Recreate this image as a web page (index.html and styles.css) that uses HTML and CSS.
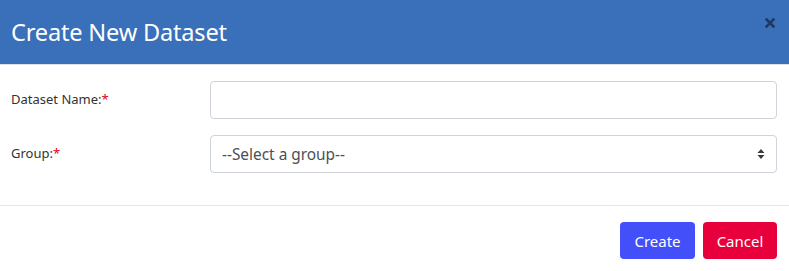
FILE: index.html
```html
<!DOCTYPE html>
<html>
  <head>
    <meta charset="utf-8">
    <title>Create New Dataset</title>
    <link rel="stylesheet" href="styles.css">
  </head>
  <body>
    <section class="modal">
        <header class="modalHeader">
            <h1>Create New Dataset</h1>
            <button class="close" aria-label="Close">
                <svg width="10" height="10" viewBox="0 0 10 10">
                    <path d="M1.5 1.5 L8.5 8.5 M8.5 1.5 L1.5 8.5" stroke="#1d3a63" stroke-width="2.6" stroke-linecap="square"/>
                </svg>
            </button>
        </header>
        <form class="modalBody">
            <div class="formRow">
                <label for="datasetName">Dataset Name:<span class="required">*</span></label>
                <input type="text" id="datasetName">
            </div>
            <div class="formRow">
                <label for="group">Group:<span class="required">*</span></label>
                <div class="selectBox">
                    <select id="group">
                        <option>--Select a group--</option>
                    </select>
                    <svg class="caret" width="8" height="12" viewBox="0 0 8 12">
                        <path d="M4 1 L7.5 5 H0.5 Z M4 11 L7.5 7 H0.5 Z" fill="#343a40"/>
                    </svg>
                </div>
            </div>
        </form>
        <footer class="modalFooter">
            <button class="btn create">Create</button>
            <button class="btn cancel">Cancel</button>
        </footer>
    </section>
  </body>
</html>
```

FILE: styles.css
```css
body {
    margin: 0;
    font-family: "Noto Sans", "Open Sans", sans-serif;
    color: #333;
    background: #fff;
}
.modal {
    width: 789px;
}
.modalHeader {
    display: flex;
    align-items: center;
    justify-content: space-between;
    height: 65px;
    box-sizing: border-box;
    padding: 0 14px 0 11px;
    background: #3a6fb9;
    border-bottom: 1px solid #dee2e6;
}
.modalHeader h1 {
    margin: 0;
    font-size: 23.6px;
    font-weight: 400;
    color: #fff;
    letter-spacing: -0.2px;
}
.close {
    display: flex;
    align-self: flex-start;
    margin-top: 18px;
    border: 0;
    background: none;
    padding: 0;
}
.modalBody {
    padding: 16px 12px 16px 11px;
}
.formRow {
    display: grid;
    grid-template-columns: 199px 1fr;
    align-items: center;
}
.formRow + .formRow {
    margin-top: 16px;
}
.formRow:last-child {
    margin-bottom: 16px;
}
.formRow label {
    font-size: 13px;
    margin-top: -2px;
}
.required {
    color: #e00022;
}
input,
select {
    box-sizing: border-box;
    width: 100%;
    height: 38px;
    border: 1px solid #ced4da;
    border-radius: 4px;
    font-family: inherit;
    font-size: 15.4px;
    color: #495057;
    background: #fff;
    padding: 0 11px;
}
.selectBox {
    position: relative;
}
select {
    appearance: none;
    -webkit-appearance: none;
}
.caret {
    position: absolute;
    right: 12px;
    top: 13px;
    pointer-events: none;
}
.modalFooter {
    display: flex;
    justify-content: flex-end;
    gap: 8px;
    padding: 16px 12px 12px;
    border-top: 1px solid #e5e5e5;
}
.btn {
    height: 37px;
    border: 0;
    border-radius: 4px;
    font-family: inherit;
    font-size: 15px;
    color: #fff;
    padding: 0 12px;
}
.create {
    width: 75px;
    background: #4350fa;
}
.cancel {
    width: 74px;
    background: #e8003c;
}
```
